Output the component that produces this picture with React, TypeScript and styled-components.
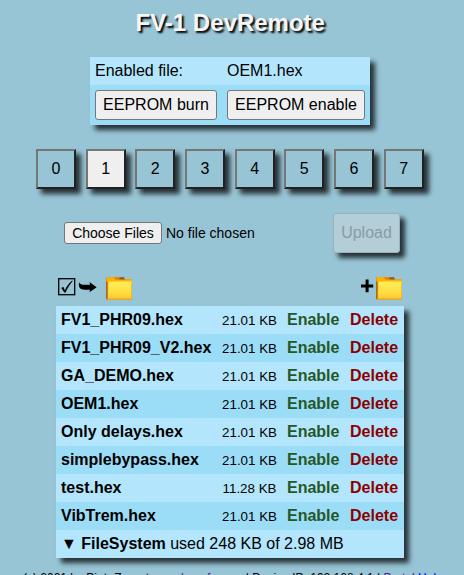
import React from 'react';
import styled, { createGlobalStyle } from 'styled-components';

const GlobalStyle = createGlobalStyle`
  *, *::before, *::after { box-sizing: border-box; }
  html, body { margin: 0; padding: 0; }
  body {
    background: #98c5d6;
    color: #000;
    font-family: "Liberation Sans", Arial, sans-serif;
    font-size: 16px;
    line-height: 18px;
    overflow: hidden;
  }
`;

const Page = styled.main`
  width: 464px;
  height: 575px;
  overflow: hidden;
  display: flex;
  flex-direction: column;
`;

const Title = styled.h1`
  margin: 9px 0 0 135.5px;
  height: 48px;
  flex: none;
  font-size: 24px;
  line-height: 28px;
  font-weight: bold;
  color: #f5f5f5;
  text-shadow: 2px 2px 2px #000;
  white-space: nowrap;
`;

const StatusPanel = styled.section`
  width: 280px;
  height: 68px;
  margin-left: 90px;
  flex: none;
  box-shadow: 5px 5px 5px rgba(0, 0, 0, 0.75);
`;

const StatusRow = styled.div<{ $shaded?: boolean }>`
  display: grid;
  grid-template-columns: 122px 138px;
  column-gap: 10px;
  padding: 5px;
  background: ${p => (p.$shaded ? '#9bdcf7' : '#b3e6fc')};
`;

const Button = styled.button`
  height: 30px;
  padding: 0;
  font: 16px "Liberation Sans", Arial, sans-serif;
  color: #000;
  background: #efefef;
  border: 1px solid #767676;
  border-radius: 3px;
  white-space: nowrap;
`;

const SlotBar = styled.nav`
  display: flex;
  gap: 9.66px;
  margin: 24px 0 0 36px;
  flex: none;
`;

const Slot = styled.button<{ $active: boolean }>`
  width: 40px;
  height: 40px;
  flex: none;
  padding: 0;
  font: 16px "Liberation Sans", Arial, sans-serif;
  color: #000;
  background: ${p => (p.$active ? '#efefef' : '#98c5d6')};
  border: 2px solid;
  border-color: #767676 #212121 #212121 #767676;
  box-shadow: 5px 5px 5px rgba(0, 0, 0, 0.75);
`;

const UploadRow = styled.form`
  display: flex;
  align-items: center;
  height: 40px;
  margin: 24px 64px 0 64px;
  flex: none;
`;

const ChooseButton = styled(Button)`
  width: 98px;
  height: 22px;
  font-size: 14px;
`;

const FileStatus = styled.span`
  margin-left: 4px;
  font-size: 14px;
  white-space: nowrap;
`;

const UploadButton = styled(Button)`
  width: 67px;
  height: 40px;
  margin-left: auto;
  color: #869da5;
  background: #b4ced8;
  border-color: #99b3bc;
  box-shadow: 5px 5px 5px rgba(0, 0, 0, 0.75);
`;

const FileTools = styled.div`
  display: flex;
  justify-content: space-between;
  width: 348px;
  height: 53px;
  padding: 20px 1px 0 1px;
  margin-left: 56px;
  flex: none;
`;

const ToolGroup = styled.div`
  display: flex;
`;

const FilePanel = styled.section`
  width: 348px;
  margin-left: 56px;
  flex: none;
  box-shadow: 5px 5px 5px rgba(0, 0, 0, 0.75);
`;

const FileRow = styled.div`
  display: grid;
  grid-template-columns: 151px 55px 53px 49px;
  column-gap: 10px;
  height: 28px;
  padding: 5px;
  background: #b3e6fc;
  white-space: nowrap;
  &:nth-child(even) { background: #9bdcf7; }
`;

const FileSize = styled.span`
  font-size: 13.33px;
  line-height: 20px;
  text-align: center;
`;

const Action = styled.span<{ $danger?: boolean }>`
  font-weight: bold;
  color: ${p => (p.$danger ? '#8b0000' : '#265726')};
`;

const Summary = styled.div`
  height: 28px;
  padding: 5px;
  background: #b3e6fc;
  white-space: pre;
`;

const Footer = styled.footer`
  margin: 14px 0 0 23px;
  flex: none;
  font-size: 12px;
  line-height: 13px;
  white-space: nowrap;
  a { color: #551a8b; text-decoration: none; }
  a:last-child { color: #0000ee; }
`;

const CheckIcon = () => (
  <svg width="20" height="28" viewBox="0 0 20 28">
    <rect x="1.7" y="5.7" width="16" height="16" fill="none" stroke="#000" strokeWidth="1.3" />
    <path d="M4.3 14.9 6.3 13.8 7.9 17.2C9.8 12.9 12 9.7 15.2 7.4L15.7 7.9C12.6 11.4 10.6 15 8.7 19.4H7.3Z" fill="#000" />
  </svg>
);

const ArrowIcon = () => (
  <svg width="28" height="28" viewBox="0 0 28 28">
    <path d="M1.9 9.2C3.2 11.2 4.8 11.7 7 11.7H13.1L12.4 9 19.7 14.2 12.4 19.3 13.1 16.7H7.2C3.7 16.7 1.9 14.9 1.9 12Z" fill="#000" />
  </svg>
);

const PlusIcon = () => (
  <svg width="15" height="28" viewBox="0 0 15 28">
    <path d="M1 13H13.2M7.1 6.6V19.3" fill="none" stroke="#000" strokeWidth="3" />
  </svg>
);

const FolderIcon = () => (
  <svg width="28" height="28" viewBox="0 0 28 28">
    <defs>
      <linearGradient id="folderFront" x1="0" y1="0" x2="0" y2="1">
        <stop stopColor="#ffee59" />
        <stop offset="0.65" stopColor="#ffdc43" />
        <stop offset="1" stopColor="#ffc52e" />
      </linearGradient>
    </defs>
    <path d="M1 4.8Q1 4.2 1.7 4.2H19L20 6.3H27V26.5H2.2Q1 26.5 1 25.5Z" fill="#e69a00" />
    <path d="M2 4.4H9L10.5 6.8H27V9H2Z" fill="#ffb300" />
    <path d="M9 4.2H14.5V6.5H10.5Z" fill="#ef7c00" />
    <path d="M14.5 4.2H19L20 6.5H14.5Z" fill="#8d5941" />
    <path d="M1 8 2.5 9V26.5Q1 26.5 1 25Z" fill="#a86c24" />
    <path d="M3.3 9.8Q3.3 8.6 4.5 8.6H26.5V26H3Z" fill="url(#folderFront)" />
    <path d="M2.5 26H27" stroke="#efa617" />
  </svg>
);

const files = [
  ['FV1_PHR09.hex', '21.01 KB'],
  ['FV1_PHR09_V2.hex', '21.01 KB'],
  ['GA_DEMO.hex', '21.01 KB'],
  ['OEM1.hex', '21.01 KB'],
  ['Only delays.hex', '21.01 KB'],
  ['simplebypass.hex', '21.01 KB'],
  ['test.hex', '11.28 KB'],
  ['VibTrem.hex', '21.01 KB'],
];

export default function App() {
  return (
    <>
      <GlobalStyle />
      <Page>
        <Title>FV-1 DevRemote</Title>
        <StatusPanel>
          <StatusRow><span>Enabled file:</span><span>OEM1.hex</span></StatusRow>
          <StatusRow $shaded><Button>EEPROM burn</Button><Button>EEPROM enable</Button></StatusRow>
        </StatusPanel>
        <SlotBar>
          {[0, 1, 2, 3, 4, 5, 6, 7].map(n => <Slot key={n} $active={n === 1}>{n}</Slot>)}
        </SlotBar>
        <UploadRow>
          <ChooseButton type="button">Choose Files</ChooseButton>
          <FileStatus>No file chosen</FileStatus>
          <UploadButton disabled>Upload</UploadButton>
        </UploadRow>
        <FileTools>
          <ToolGroup><CheckIcon /><ArrowIcon /><FolderIcon /></ToolGroup>
          <ToolGroup><PlusIcon /><FolderIcon /></ToolGroup>
        </FileTools>
        <FilePanel>
          {files.map(([name, size]) => (
            <FileRow key={name}>
              <b>{name}</b>
              <FileSize>{size}</FileSize>
              <Action>Enable</Action>
              <Action $danger>Delete</Action>
            </FileRow>
          ))}
          <Summary>▼ <b>FileSystem</b> used 248 KB of 2.98 MB</Summary>
        </FilePanel>
        <Footer>
          (c) 2021 by Piotr Zapart <a href="#site">www.hexefx.com</a> | Device IP: 192.168.4.1 | <a href="#portal">Portal</a> <a href="#help">Help</a>
        </Footer>
      </Page>
    </>
  );
}
